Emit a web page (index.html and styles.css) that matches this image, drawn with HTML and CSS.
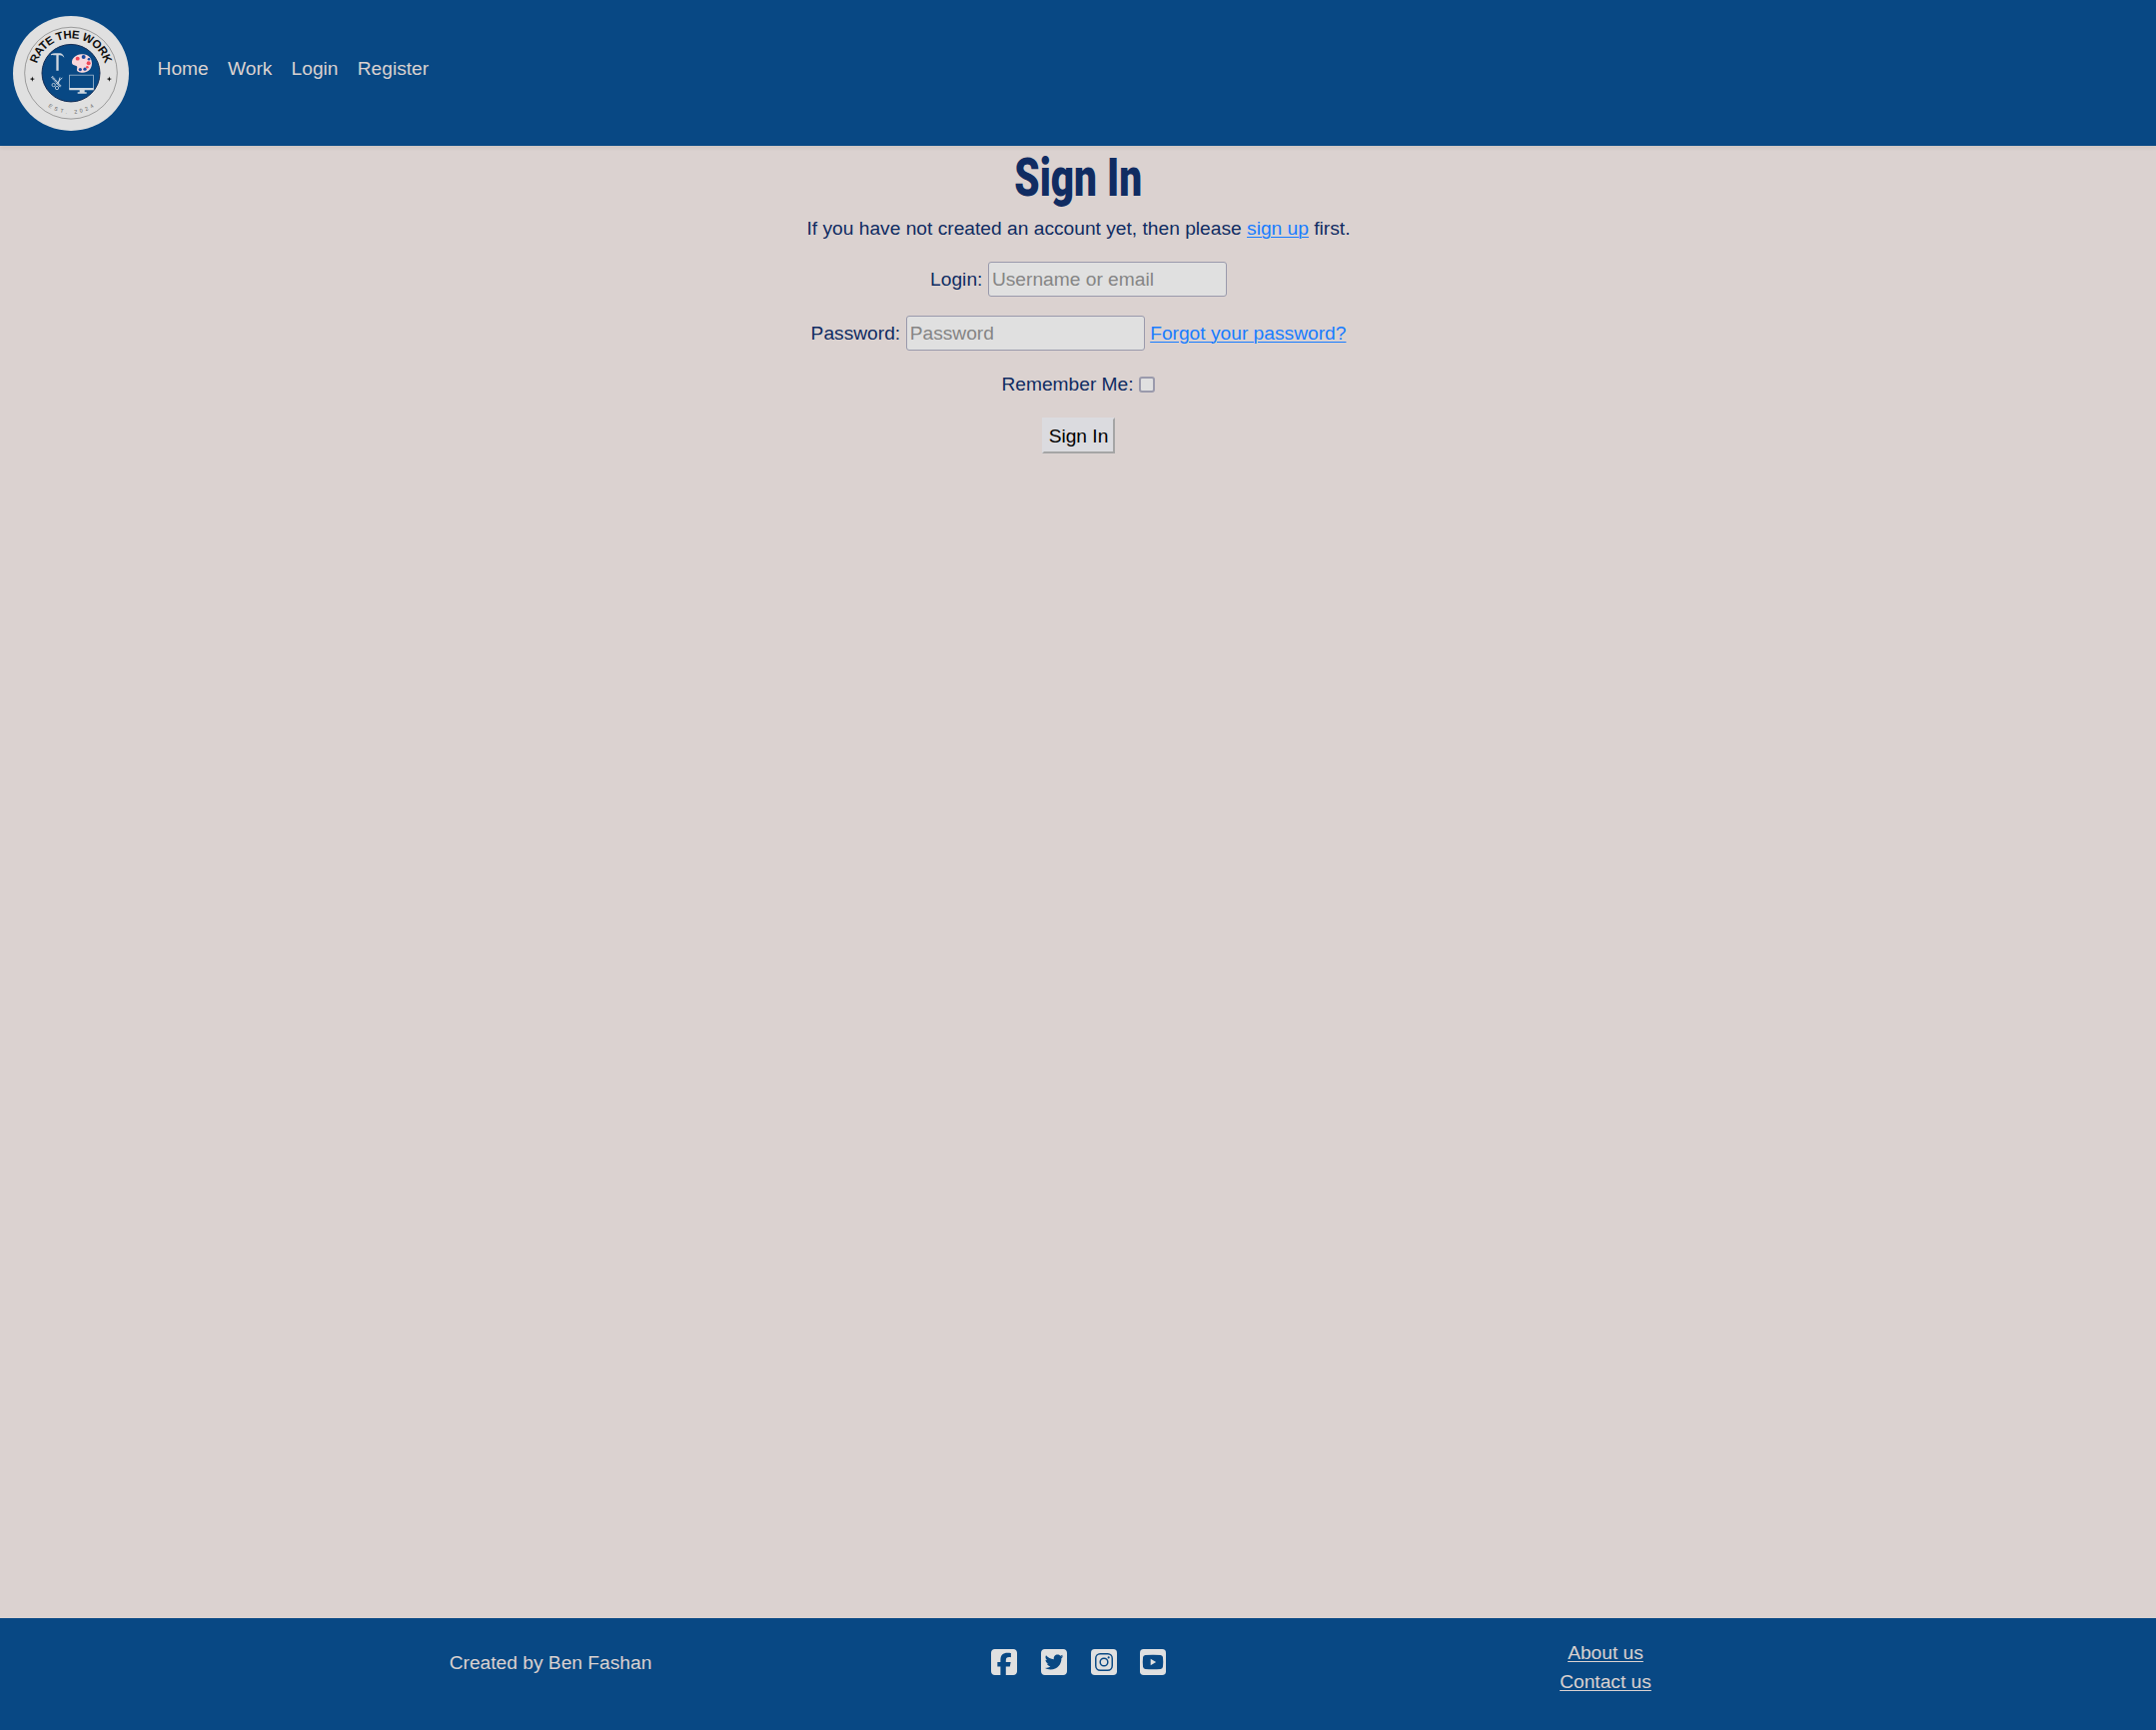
FILE: index.html
```html
<!DOCTYPE html>
<html lang="en">
<head>
<meta charset="utf-8">
<title>Sign In</title>
<link rel="stylesheet" href="styles.css">
</head>
<body>
<header class="header">
  <a class="brand" href="#">
    <svg class="logo" viewBox="39 47 348 348" preserveAspectRatio="none" role="img" aria-label="Rate the Work">
      <defs>
        <path id="arc-top" d="M107 221a106 106 0 0 1 212 0"/>
        <path id="arc-bottom" d="M91 221a122 122 0 0 0 244 0"/>
      </defs>
      <circle cx="213" cy="221" r="174" fill="#e0e0e0"/>
      <circle cx="213" cy="220" r="139" fill="none" stroke="#777" stroke-width="2"/>
      <circle cx="213" cy="220" r="87" fill="#084884" stroke="#142c54" stroke-width="3"/>
      <text class="logo-name" text-anchor="middle"><textPath href="#arc-top" startOffset="50%" textLength="274">RATE THE WORK</textPath></text>
      <text class="logo-est" text-anchor="middle"><textPath href="#arc-bottom" startOffset="50%" textLength="146">EST. 2024</textPath></text>
      <path d="M97 230l2 6 6 2-6 2-2 6-2-6-6-2 6-2zM328 230l2 6 6 2-6 2-2 6-2-6-6-2 6-2z" fill="#111"/>
      <path d="M153 163q7-4 15-3h13q9 2 12 13-6-7-13-7h-4v47h-7v-47h-7q-4-2-9 0z" fill="#d0d6de"/>
      <path d="M245 163c20-2 31 12 31 28 0 17-13 28-27 28-12 0-20-5-18-11 1-6 2-8-2-10-5-2-12-2-13-9-1-14 12-25 29-26z" fill="#f8d8dc"/>
      <g fill="#f04858"><circle cx="233" cy="176" r="6"/><circle cx="266" cy="190" r="6"/><circle cx="262" cy="202" r="4"/></g>
      <g fill="#1848a0"><circle cx="251" cy="171" r="6"/><circle cx="267" cy="178" r="4"/><circle cx="255" cy="208" r="5"/><circle cx="241" cy="209" r="5"/></g>
      <g fill="none" stroke="#c8d4e0">
        <path d="M156 231l27 31" stroke-width="7" stroke-dasharray="3 1.5"/>
        <path d="M187 234l-19 20M180 233l-6 22" stroke-width="3"/>
        <circle cx="161" cy="256" r="5" stroke-width="2.5"/><circle cx="171" cy="265" r="5" stroke-width="2.5"/>
        <rect x="209" y="226" width="71" height="43" stroke-width="2"/>
      </g>
      <path d="M208 265h73v7h-27v6h6v4h-27v-4h6v-6h-31z" fill="#d0d8e0"/>
    </svg>
  </a>
  <nav class="nav">
    <a href="#">Home</a><a href="#">Work</a><a href="#">Login</a><a href="#">Register</a>
  </nav>
</header>

<main class="main">
  <h1 class="title"><span class="title-text">Sign In</span></h1>
  <p class="intro">If you have not created an account yet, then please <a href="#">sign up</a> first.</p>
  <form class="form">
    <div class="row"><label for="login">Login:</label><input class="field" id="login" type="text" placeholder="Username or email"></div>
    <div class="row"><label for="password">Password:</label><input class="field" id="password" type="password" placeholder="Password"><a href="#">Forgot your password?</a></div>
    <div class="row row-check"><label for="remember">Remember Me:</label><input class="check" id="remember" type="checkbox"></div>
    <button class="submit" type="button">Sign In</button>
  </form>
</main>

<footer class="footer">
  <div class="footer-grid">
    <p class="credit">Created by Ben Fashan</p>
    <div class="social">
      <a href="#" aria-label="Facebook"><svg viewBox="0 32 448 448"><path d="M64 32C28.7 32 0 60.7 0 96V416c0 35.3 28.7 64 64 64h98.2V334.2H109.4V256h52.8V222.3c0-87.1 39.4-127.5 125-127.5c16.2 0 44.2 3.2 55.7 6.4V172c-6-.6-16.5-1-29.6-1c-42 0-58.2 15.9-58.2 57.2V256h83.6l-14.4 78.2H255V480H384c35.3 0 64-28.7 64-64V96c0-35.3-28.7-64-64-64H64z"/></svg></a>
      <a href="#" aria-label="Twitter"><svg viewBox="0 32 448 448"><path d="M64 32C28.7 32 0 60.7 0 96V416c0 35.3 28.7 64 64 64H384c35.3 0 64-28.7 64-64V96c0-35.3-28.7-64-64-64H64zM351.3 199.3v0c0 86.7-66 186.6-186.6 186.6c-37.2 0-71.7-10.8-100.7-29.4c5.3 .6 10.4 .8 15.8 .8c30.7 0 58.9-10.4 81.4-28c-28.8-.6-53-19.5-61.3-45.5c10.1 1.5 19.2 1.5 29.6-1.2c-30-6.1-52.5-32.5-52.5-64.4v-.8c8.7 4.9 18.9 7.9 29.6 8.3c-9-6-16.4-14.1-21.5-23.6s-7.8-20.2-7.7-31c0-12.2 3.2-23.4 8.9-33.1c32.3 39.8 80.8 65.8 135.2 68.6c-9.3-44.5 24-80.6 64-80.6c18.9 0 35.9 7.9 47.9 20.7c14.8-2.8 29-8.3 41.6-15.8c-4.9 15.2-15.2 28-28.8 36.1c13.2-1.4 26-5.1 37.8-10.2c-8.9 13.1-20.1 24.7-32.9 34c.2 2.8 .2 5.7 .2 8.5z"/></svg></a>
      <a href="#" aria-label="Instagram"><svg viewBox="0 32 448 448"><rect y="32" width="448" height="448" rx="64"/><rect class="cut-line" x="82" y="114" width="284" height="284" rx="76"/><circle class="cut-line" cx="224" cy="256" r="66"/><circle class="cut" cx="304" cy="177" r="18"/></svg></a>
      <a href="#" aria-label="YouTube"><svg viewBox="0 32 448 448"><rect y="32" width="448" height="448" rx="64"/><path class="cut" d="M92 136q132-14 264 0 34 5 39 35 11 85 0 168-5 31-39 36-132 13-264 0-34-5-39-36-11-84 0-168 5-30 39-35z"/><path d="M184 202v108l94-54z"/></svg></a>
    </div>
    <div class="links"><a href="#">About us</a><a href="#">Contact us</a></div>
  </div>
</footer>
</body>
</html>
```
FILE: styles.css
```css
* { box-sizing: border-box; }

body {
  display: flex;
  flex-direction: column;
  min-height: 100vh;
  margin: 0;
  background: #dbd2d0;
  color: #102c62;
  font: 19.2px/28.8px "Liberation Sans", Arial, sans-serif;
}

a { color: #187cff; text-underline-offset: 2px; text-decoration-thickness: 1px; }
p { margin: 0; }

.header {
  display: flex;
  height: 146px;
  padding: 16px 13px 0;
  background: #084884;
  box-shadow: 0 2px 4px rgba(0, 0, 0, .07);
}
.logo { display: block; width: 116px; height: 115px; }
.logo-name { font: bold 34.5px "Liberation Sans", Arial, sans-serif; fill: #111; }
.logo-est { font: 16px "Liberation Sans", Arial, sans-serif; fill: #666; }
.nav { display: flex; gap: 19.2px; padding: 39px 0 0 28.6px; }
.nav a { color: #dbd2d0; text-decoration: none; }

.main { flex: 1; display: flex; flex-direction: column; align-items: center; }
.title { margin: 0; height: 69px; font: 900 54px/64px Roboto, sans-serif; }
.title-text { display: inline-block; transform: scaleX(.75); }
.intro { height: 47px; padding-left: 1px; }
.form { display: flex; flex-direction: column; align-items: center; }
.row { display: flex; align-items: center; gap: 5.5px; height: 35px; margin-bottom: 19px; padding-left: 1px; }
.row label, .row a { padding-top: 1px; }
.row-check { height: 29px; gap: 5px; margin-bottom: 19px; padding-left: 0; }
.field {
  width: 239px;
  height: 35px;
  padding: 1px 3px;
  border: 1px solid #9a9aac;
  border-radius: 3px;
  background: #e0e0e0;
  color: #102c62;
  font: inherit;
}
.field::placeholder { color: #858585; opacity: 1; }
.check {
  appearance: none;
  width: 16px;
  height: 16px;
  margin: 0;
  border: 2px solid #9a9aac;
  border-radius: 3px;
  background: #e0e0e0;
}
.submit {
  width: 73px;
  height: 36px;
  padding: 2px 0 0 1px;
  border: 2px solid;
  border-color: #dbdbdf #a5a5a5 #a5a5a5 #dbdbdf;
  background: #dbdbdf;
  color: #000;
  font: inherit;
}

.footer { height: 112px; background: #084884; }
.footer-grid { display: grid; grid-template-columns: repeat(3, 528px); justify-content: center; text-align: center; }
.footer, .footer a { color: #dbd2d0; }
.credit { padding-top: 31px; }
.social { display: flex; justify-content: center; gap: 23.7px; padding: 31px 0 0 1.6px; }
.social svg { display: block; width: 26px; height: 26px; fill: #e0e0e0; }
.social .cut { fill: #084884; }
.social .cut-line { fill: none; stroke: #084884; stroke-width: 25; }
.links { display: flex; flex-direction: column; align-items: center; padding-top: 21px; }
```
